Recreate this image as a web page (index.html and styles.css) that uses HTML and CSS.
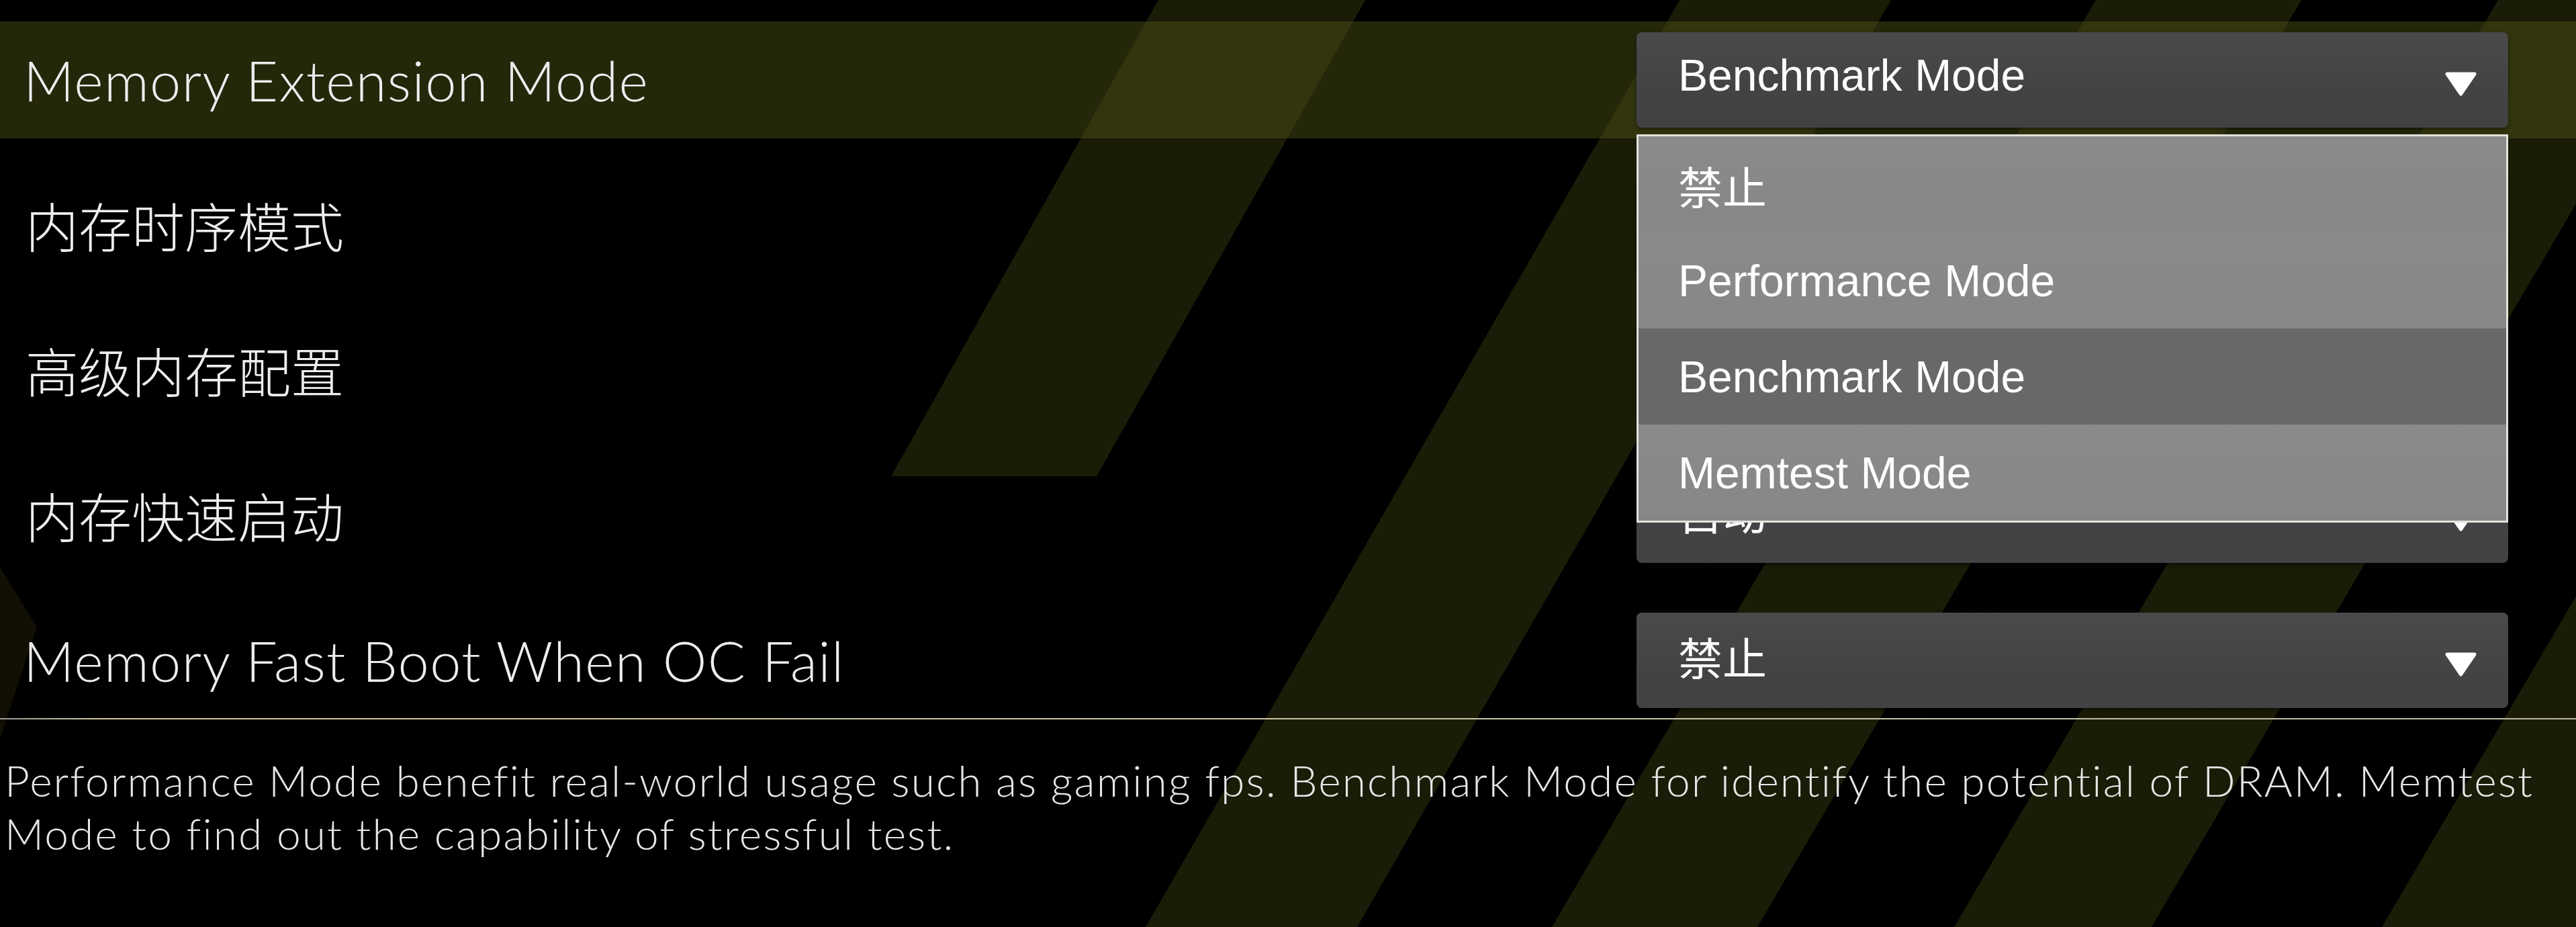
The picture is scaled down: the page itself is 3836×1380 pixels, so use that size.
FILE: index.html
```html
<!DOCTYPE html>
<html lang="zh-CN">
<head>
<meta charset="utf-8">
<title>Memory Extension Mode</title>
<link rel="stylesheet" href="styles.css">
</head>
<body>
<div class="backdrop" aria-hidden="true">
  <svg class="stripes" width="3836" height="1380" viewBox="0 0 3836 1380">
    <polygon points="1725,0 2033,0 1633,709 1327,709"/>
    <polygon points="2501,0 2816,0 2021,1380 1706,1380"/>
    <polygon points="3121,0 3427,0 2617,1380 2311,1380"/>
    <polygon points="3720,0 4014,0 3204,1380 2910,1380"/>
    <polygon points="4357,0 4646,0 3836,1380 3547,1380"/>
    <polygon class="faint" points="0,845 55,933 0,1100"/>
  </svg>
</div>

<main class="page">
  <section class="rows">
    <div class="row active">
      <div class="label">Memory Extension Mode</div>
      <div class="select-wrap">
        <div class="select">
          <span class="value">Benchmark Mode</span>
          <svg class="arrow" width="47" height="36" viewBox="0 0 47 36"><path d="M3 3 H44 L23.5 33 Z"/></svg>
        </div>
        <ul class="menu">
          <li class="option">禁止</li>
          <li class="option">Performance Mode</li>
          <li class="option selected">Benchmark Mode</li>
          <li class="option">Memtest Mode</li>
        </ul>
      </div>
    </div>
    <div class="row">
      <div class="label zh">内存时序模式</div>
      <div class="select-wrap">
        <div class="select">
          <span class="value"></span>
          <svg class="arrow" width="47" height="36" viewBox="0 0 47 36"><path d="M3 3 H44 L23.5 33 Z"/></svg>
        </div>
      </div>
    </div>
    <div class="row">
      <div class="label zh">高级内存配置</div>
      <div class="select-wrap">
        <div class="select">
          <span class="value"></span>
          <svg class="arrow" width="47" height="36" viewBox="0 0 47 36"><path d="M3 3 H44 L23.5 33 Z"/></svg>
        </div>
      </div>
    </div>
    <div class="row">
      <div class="label zh">内存快速启动</div>
      <div class="select-wrap">
        <div class="select">
          <span class="value">自动</span>
          <svg class="arrow" width="47" height="36" viewBox="0 0 47 36"><path d="M3 3 H44 L23.5 33 Z"/></svg>
        </div>
      </div>
    </div>
    <div class="row">
      <div class="label">Memory Fast Boot When OC Fail</div>
      <div class="select-wrap">
        <div class="select">
          <span class="value">禁止</span>
          <svg class="arrow" width="47" height="36" viewBox="0 0 47 36"><path d="M3 3 H44 L23.5 33 Z"/></svg>
        </div>
      </div>
    </div>
  </section>
  <div class="divider"></div>
  <p class="desc">Performance Mode benefit real-world usage such as gaming fps. Benchmark Mode for identify the potential of DRAM. Memtest Mode to find out the capability of stressful test.</p>
</main>
</body>
</html>
```
FILE: styles.css
```css
html, body {
  margin: 0;
  padding: 0;
  background: #000;
}

body {
  width: 3836px;
  height: 1380px;
  overflow: hidden;
  position: relative;
  color: #ececec;
  font-family: "Lato", "Noto Sans CJK SC", sans-serif;
}

.backdrop {
  position: absolute;
  inset: 0;
  z-index: 0;
}

.stripes polygon {
  fill: #1b1c07;
}

.stripes polygon.faint {
  fill: #120f05;
}

.page {
  position: relative;
  z-index: 1;
  padding-top: 32px;
}

.rows {
  display: flex;
  flex-direction: column;
  gap: 42px;
}

.row {
  height: 174px;
  display: flex;
  align-items: center;
  justify-content: space-between;
  padding: 0 101px 0 35px;
}

.row.active {
  background: rgba(74, 78, 22, 0.5);
}

.label {
  font-weight: 300;
  font-size: 83px;
  letter-spacing: 1.3px;
  line-height: 100px;
  color: #ededed;
  white-space: nowrap;
}

.label.zh {
  font-family: "Noto Sans CJK SC", sans-serif;
  font-size: 79px;
  font-weight: 300;
  letter-spacing: 0;
  padding-left: 3px;
}

.select-wrap {
  position: relative;
}

.select {
  box-sizing: border-box;
  width: 1298px;
  height: 142px;
  padding: 0 47px 14px 62px;
  display: flex;
  align-items: center;
  justify-content: space-between;
  border-radius: 8px;
  background: linear-gradient(#4a4a4b, #434345 60%, #424244);
  box-shadow: 0 3px 6px rgba(0, 0, 0, 0.45);
}

.value {
  font-family: "Liberation Sans", "Noto Sans CJK SC", sans-serif;
  font-size: 66px;
  color: #fcfcfc;
  white-space: nowrap;
}

.arrow {
  display: block;
  margin-top: 26px;
}

.arrow path {
  fill: #ffffff;
  stroke: #ffffff;
  stroke-width: 5;
  stroke-linejoin: round;
}

.menu {
  position: absolute;
  top: 152px;
  left: 0;
  z-index: 5;
  box-sizing: border-box;
  width: 1298px;
  margin: 0;
  padding: 0;
  list-style: none;
  border: 3px solid #e2e2dc;
  background: #888888;
}

.option {
  box-sizing: border-box;
  height: 143px;
  padding-left: 59px;
  display: flex;
  align-items: center;
  font-family: "Liberation Sans", "Noto Sans CJK SC", sans-serif;
  font-size: 66px;
  color: #fdfdfd;
  background: linear-gradient(#8a8a8a, #878787);
}

.option.selected {
  background: #686868;
}

.divider {
  height: 2px;
  margin-top: -1px;
  background: linear-gradient(90deg, #9a9a96, #cfc8a2 4%, #c9c4a6 60%, #bdb9a4);
}

.desc {
  margin: 51px 0 0;
  padding-left: 7px;
  font-size: 64px;
  font-weight: 300;
  line-height: 79px;
  letter-spacing: 2.1px;
  color: #e6e6e6;
}
```
